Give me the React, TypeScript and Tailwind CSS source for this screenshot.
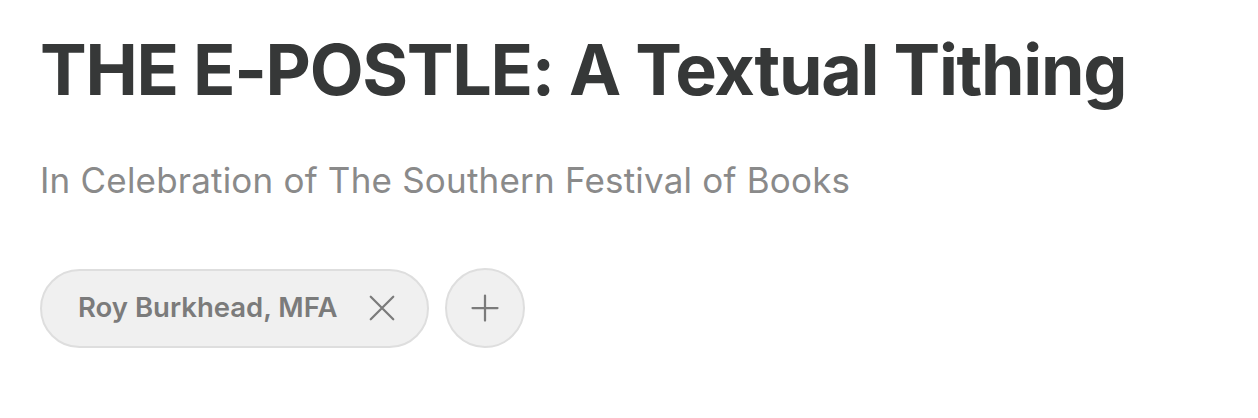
export default function App() {
  return (
    <div className="min-h-screen bg-white px-10 pt-[26px]" style={{ fontFamily: "Inter, 'Noto Sans', sans-serif" }}>
      <h1 className="text-[70px] font-bold leading-[88px] tracking-[-1.3px] text-[#363838]">
        THE E-POSTLE: A Textual Tithing
      </h1>
      <p className="mt-[44px] text-[35px] leading-[44px] tracking-[0.2px] text-[#8a8a8a]">
        In Celebration of The Southern Festival of Books
      </p>
      <div className="mt-[66px] flex items-center gap-4">
        <div className="flex h-[79px] items-center gap-[30px] rounded-full border-2 border-[#dedede] bg-[#f0f0f0] pl-9 pr-[30px]">
          <span className="text-[27.5px] font-semibold text-[#7b7b7b]">Roy Burkhead, MFA</span>
          <svg width="30" height="30" viewBox="0 0 24 24" fill="none" stroke="#7b7b7b" strokeWidth="1.8" strokeLinecap="round">
            <path d="M3 3 L21 21 M21 3 L3 21" />
          </svg>
        </div>
        <div className="flex h-[80px] w-[80px] items-center justify-center rounded-full border-2 border-[#dedede] bg-[#f0f0f0]">
          <svg width="30" height="30" viewBox="0 0 24 24" fill="none" stroke="#7b7b7b" strokeWidth="1.8" strokeLinecap="round">
            <path d="M12 2 V22 M2 12 H22" />
          </svg>
        </div>
      </div>
    </div>
  );
}
